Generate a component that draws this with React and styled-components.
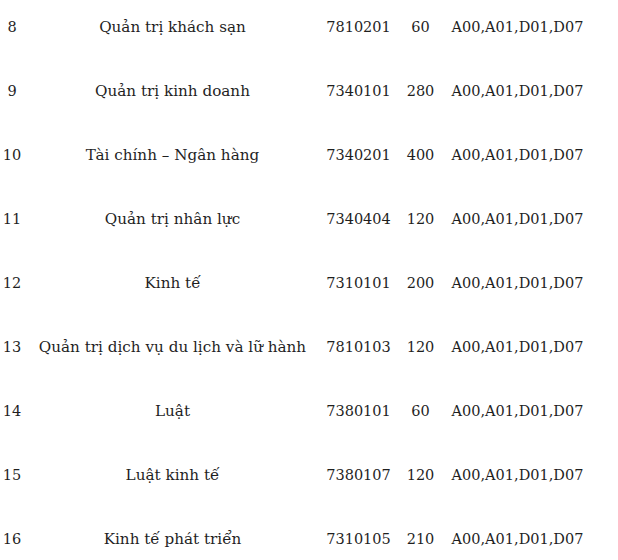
import { createGlobalStyle, styled } from "styled-components";

const GlobalStyle = createGlobalStyle`
  html, body {
    margin: 0;
    padding: 0;
    background: #fff;
  }
  body {
    font-family: "DejaVu Serif", "Liberation Serif", serif;
    color: #1f1f1f;
  }
`;

const Table = styled.div`
  width: 618px;
  height: 560px;
  overflow: hidden;
`;

const Row = styled.div`
  display: grid;
  grid-template-columns: 24px 297px 75px 49px 145px;
  height: 64px;
  padding-top: 15px;
  box-sizing: border-box;
  font-size: 14.5px;
  line-height: 24px;
`;

const Cell = styled.div`
  text-align: center;
  white-space: nowrap;
  font-size: ${(p) => (p.$wide ? "15.2px" : "inherit")};
`;

const majors = [
  ["8", "Quản trị khách sạn", "7810201", "60"],
  ["9", "Quản trị kinh doanh", "7340101", "280"],
  ["10", "Tài chính – Ngân hàng", "7340201", "400"],
  ["11", "Quản trị nhân lực", "7340404", "120"],
  ["12", "Kinh tế", "7310101", "200"],
  ["13", "Quản trị dịch vụ du lịch và lữ hành", "7810103", "120"],
  ["14", "Luật", "7380101", "60"],
  ["15", "Luật kinh tế", "7380107", "120"],
  ["16", "Kinh tế phát triển", "7310105", "210"],
];

export default function App() {
  return (
    <>
      <GlobalStyle />
      <Table>
        {majors.map(([no, name, code, quota]) => (
          <Row key={no}>
            <Cell>{no}</Cell>
            <Cell $wide>{name}</Cell>
            <Cell>{code}</Cell>
            <Cell>{quota}</Cell>
            <Cell>A00,A01,D01,D07</Cell>
          </Row>
        ))}
      </Table>
    </>
  );
}
